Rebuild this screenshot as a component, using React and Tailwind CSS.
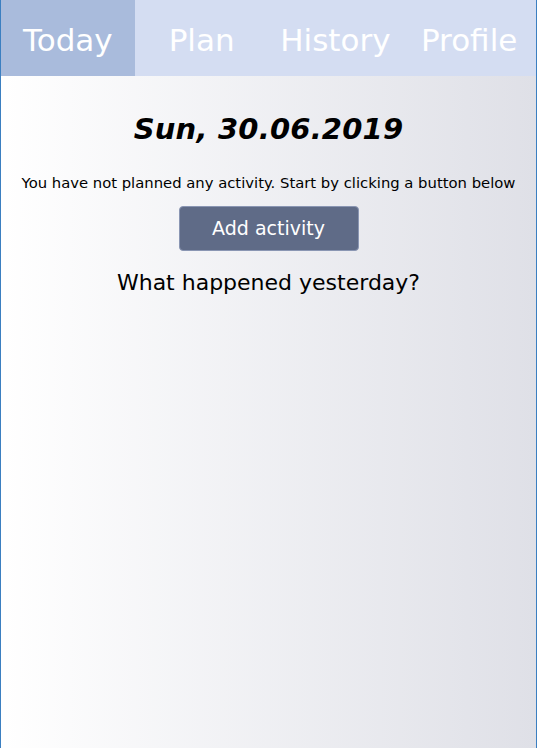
const tabs = ['Today', 'Plan', 'History', 'Profile'];

export default function App() {
  return (
    <div
      className="h-[748px] w-[537px] flex flex-col border-x border-[#3b7fc1] overflow-hidden"
      style={{ fontFamily: '"Comic Sans MS", "DejaVu Sans", sans-serif' }}
    >
      {/* Nav */}
      <nav className="grid grid-cols-4 h-[76px] bg-[#d4ddf2] shrink-0">
        {tabs.map((t, i) => (
          <div
            key={t}
            className={`flex items-center justify-center pt-[5px] text-[31px] text-white ${i === 0 ? 'bg-[#a9bbdc]' : ''}`}
          >
            {t}
          </div>
        ))}
      </nav>

      {/* Content */}
      <main className="flex-1 flex flex-col items-center bg-gradient-to-r from-white to-[#dfe0e7] text-black">
        <h1 className="mt-[35px] text-[29px] font-bold italic leading-[36px] tracking-[0.2px]">Sun, 30.06.2019</h1>
        <p className="mt-[27px] text-[14.8px] leading-[18px] whitespace-nowrap">
          You have not planned any activity. Start by clicking a button below
        </p>
        <button className="mt-[14px] w-[180px] h-[45px] rounded bg-[#5f6b87] border border-[#8a96b3] text-white text-[19px]">
          Add activity
        </button>
        <h2 className="mt-[17px] text-[22px] leading-[30px]">What happened yesterday?</h2>
      </main>
    </div>
  );
}
